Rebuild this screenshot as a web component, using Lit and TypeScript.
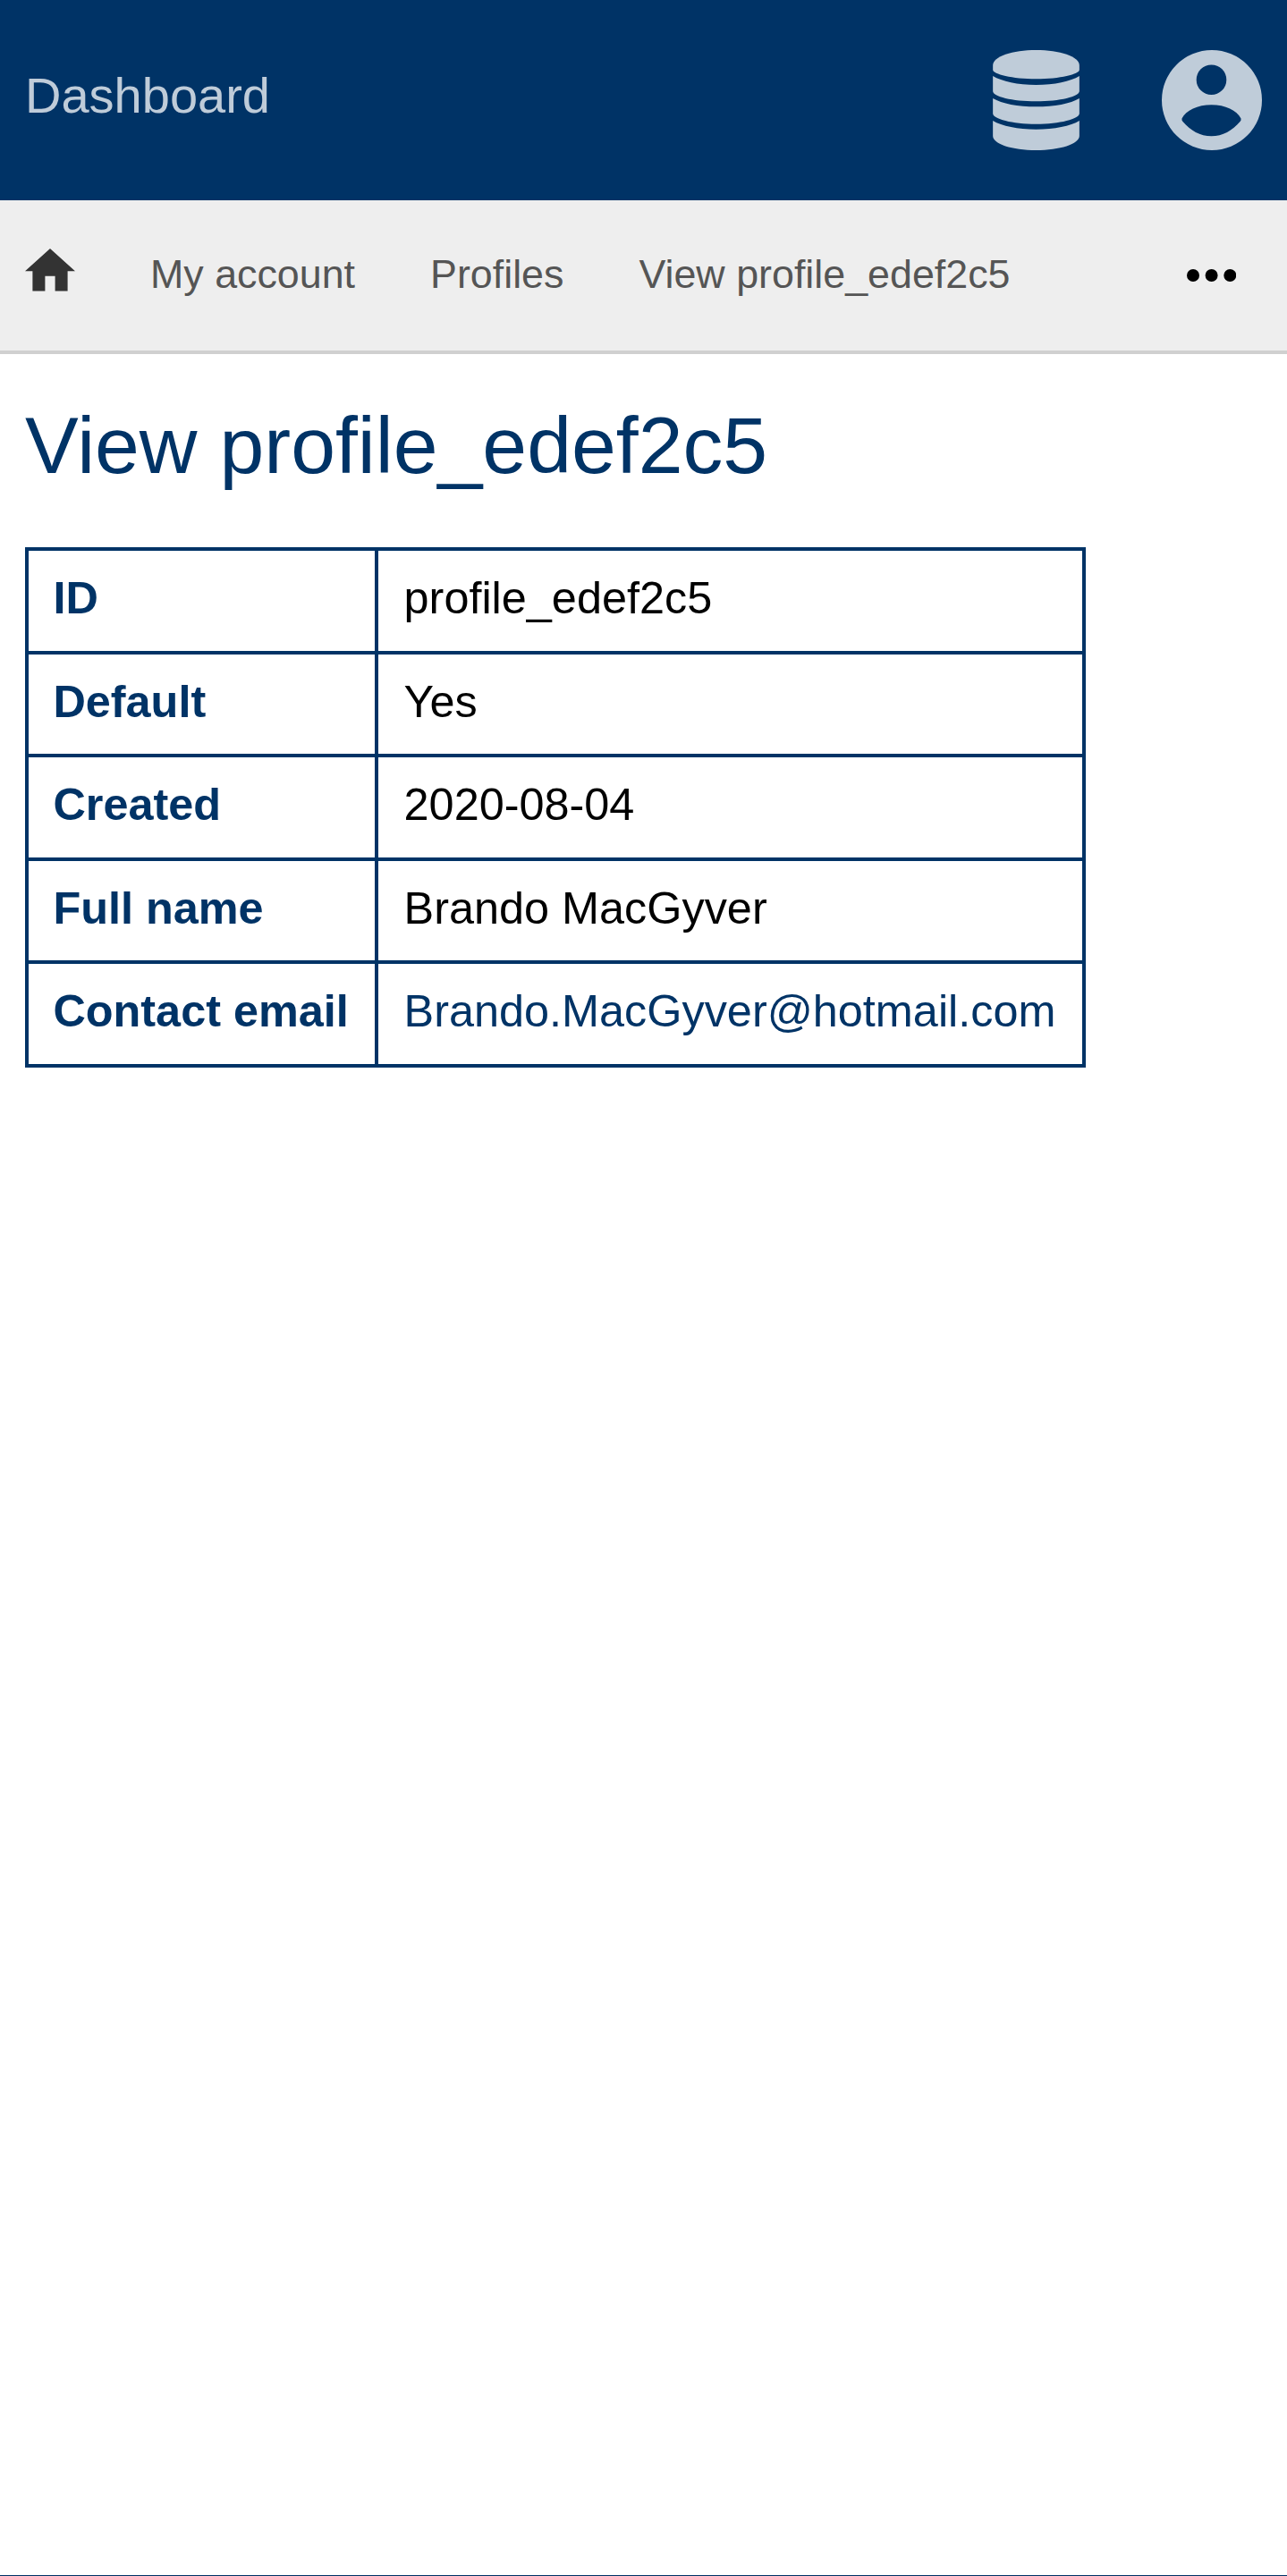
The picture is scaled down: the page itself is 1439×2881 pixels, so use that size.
import { LitElement, css, html } from "lit";
import { customElement } from "lit/decorators.js";

const rows: [string, string, boolean?][] = [
  ["ID", "profile_edef2c5"],
  ["Default", "Yes"],
  ["Created", "2020-08-04"],
  ["Full name", "Brando MacGyver"],
  ["Contact email", "Brando.MacGyver@hotmail.com", true],
];

@customElement("app-root")
export class AppRoot extends LitElement {
  static styles = css`
    :host {
      display: flex;
      flex-direction: column;
      min-height: 2881px;
      font-family: "Liberation Sans", Arial, sans-serif;
      background: #fff;
      color: #000;
    }
    a {
      text-decoration: none;
      color: inherit;
    }
    svg {
      display: block;
    }
    .topbar {
      height: 224px;
      box-sizing: border-box;
      padding: 0 28px;
      display: flex;
      align-items: center;
      gap: 92px;
      background: #003366;
      color: #bfccd9;
    }
    .brand {
      font-size: 56px;
      margin: 0 auto 12px 0;
    }
    .topbar svg {
      fill: #bfccd9;
    }
    .crumbs {
      height: 172px;
      box-sizing: border-box;
      border-bottom: 4px solid #d0d0d0;
      padding: 0 57px 0 28px;
      display: flex;
      align-items: center;
      background: #eee;
      font-size: 44.8px;
      color: #555;
    }
    .home {
      margin: 0 42px 12px 0;
      fill: #333;
    }
    .crumbs a {
      padding: 0 42px 3px;
    }
    .more {
      margin-left: auto;
      fill: #000;
    }
    main {
      flex: 1;
      padding: 0 28px;
    }
    h1 {
      margin: 51px 0 62px;
      font-size: 89.6px;
      font-weight: 400;
      color: #003366;
    }
    table {
      border-collapse: collapse;
      font-size: 50.4px;
      line-height: 58px;
    }
    th,
    td {
      border: 4px solid #003366;
      padding: 24px 28.4px 29.6px;
      text-align: left;
    }
    th {
      padding-left: 27.4px;
      padding-right: 29.4px;
      color: #003366;
      font-weight: 700;
    }
    td {
      padding-right: 30px;
    }
    td a {
      color: #003366;
    }
    footer {
      border-top: 1px solid #003366;
    }
  `;

  render() {
    return html`
      <header class="topbar">
        <a class="brand" href="#">Dashboard</a>
        <svg width="97" height="112" viewBox="0 0 96.7 112">
          <path d="M0 17C0 7 22 0 48.3 0S96.7 7 96.7 17V22C96.7 27 75 32.3 48.3 32.3S0 27 0 22Z" />
          <path d="M0 29C10 35 28 39 48.3 39S87 35 96.7 29V46C96.7 52 75 57.3 48.3 57.3S0 52 0 46Z" />
          <path d="M0 54C10 60 28 63.3 48.3 63.3S87 60 96.7 54V71C96.7 77 75 82.7 48.3 82.7S0 77 0 71Z" />
          <path d="M0 79C10 85 28 88.7 48.3 88.7S87 85 96.7 79V96C96.7 105 75 112 48.3 112S0 105 0 96Z" />
        </svg>
        <svg width="112" height="112" viewBox="0 0 112 112">
          <path
            fill-rule="evenodd"
            d="M56 0A56 56 0 1 0 56 112A56 56 0 1 0 56 0ZM55.5 16.4A16.8 16.8 0 1 1 55.5 50A16.8 16.8 0 1 1 55.5 16.4ZM22.5 76.5C27 67.5 40 61.3 55.5 61.3S84 67.5 88.5 76.5Q89 78.5 87.5 80C79 90 68 96.3 55.5 96.3S32 90 23.5 80Q22 78.5 22.5 76.5Z"
          />
        </svg>
      </header>
      <nav class="crumbs">
        <svg class="home" width="56" height="47.6" viewBox="2 3 20 17">
          <path d="M10 20v-6h4v6h5v-8h3L12 3 2 12h3v8z" />
        </svg>
        <a href="#">My account</a>
        <a href="#">Profiles</a>
        <a href="#">View profile_edef2c5</a>
        <svg class="more" width="55" height="14" viewBox="0 0 55 14">
          <circle cx="7" cy="7" r="7" />
          <circle cx="27.6" cy="7" r="7" />
          <circle cx="48.3" cy="7" r="7" />
        </svg>
      </nav>
      <main>
        <h1>View profile_edef2c5</h1>
        <table>
          ${rows.map(
            ([label, value, isMail]) => html`
              <tr>
                <th>${label}</th>
                <td>${isMail ? html`<a href="#">${value}</a>` : value}</td>
              </tr>
            `,
          )}
        </table>
      </main>
      <footer></footer>
    `;
  }
}
